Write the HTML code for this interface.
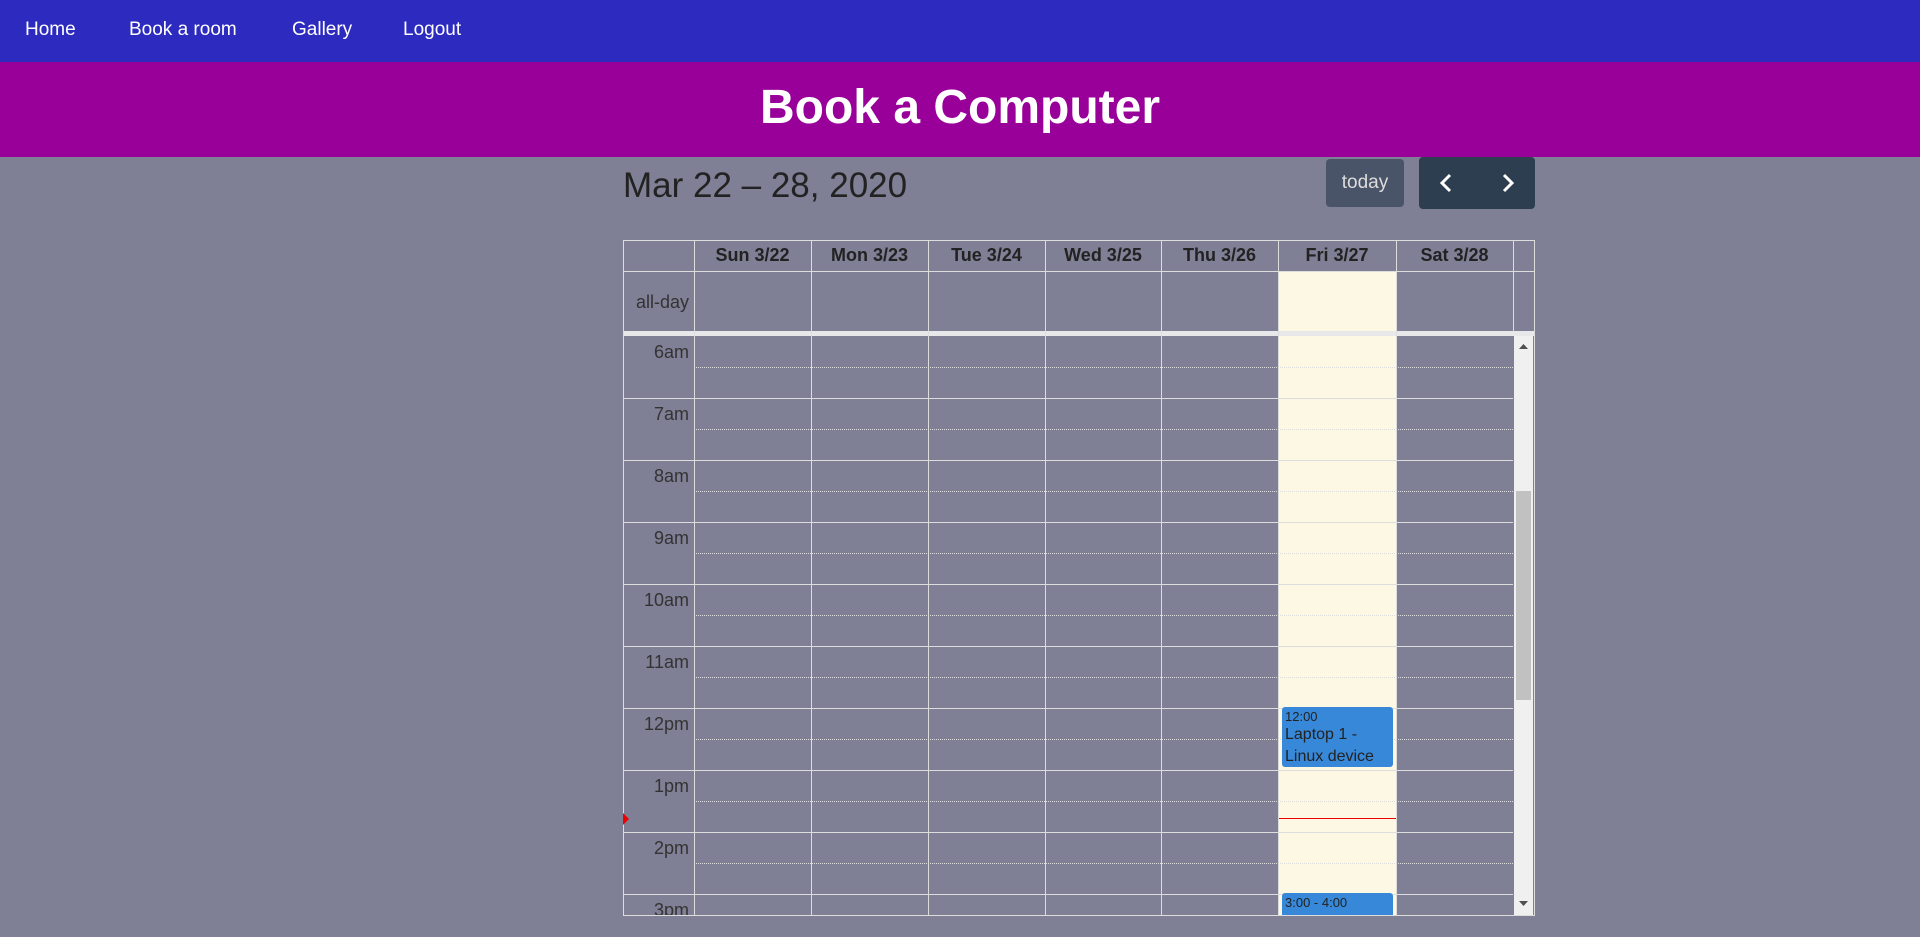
<!DOCTYPE html>
<html><head><style>
*{margin:0;padding:0;box-sizing:border-box}
body{width:1920px;height:937px;background:#7f7f95;font-family:"Liberation Sans",sans-serif;position:relative;overflow:hidden;color:#222}
.nav{position:absolute;left:0;top:0;width:1920px;height:62px;background:#2d2abf}
.nav a{position:absolute;top:19px;color:#fff;font-size:19px;text-decoration:none}
.hdr{position:absolute;left:0;top:62px;width:1920px;height:95px;background:#990099;color:#fff;font-size:48px;font-weight:bold;text-align:center;line-height:92px}
.title{position:absolute;left:623px;top:166px;font-size:35px;color:#222}
.today{position:absolute;left:1326px;top:159px;width:78px;height:48px;background:#4a5468;border-radius:4px;color:#ddd;font-size:19px;text-align:center;line-height:48px}
.grp{position:absolute;left:1419px;top:157px;width:116px;height:52px;background:#2c3e50;border-radius:4px}
.ab{position:absolute;background:#ddd}
.dl{position:absolute;height:0;border-top:1px dotted #ddd}
.cell{position:absolute}
.lbl{position:absolute;width:66px;text-align:right;font-size:18px;color:#333;white-space:nowrap}
.dh{position:absolute;top:240px;height:31px;line-height:31px;font-weight:bold;font-size:18px;text-align:center;color:#222}
.ev{position:absolute;left:1282px;width:111px;background:#3788d8;border-radius:3px;overflow:hidden;color:#222;padding:2px 3px}
</style></head><body>
<div class="nav">
<a style="left:25px">Home</a><a style="left:129px">Book a room</a><a style="left:292px">Gallery</a><a style="left:403px">Logout</a>
</div>
<div class="hdr">Book a Computer</div>
<div class="title">Mar 22 – 28, 2020</div>
<div class="today">today</div>
<div class="grp">
<svg width="116" height="52" style="position:absolute;left:0;top:0"><path d="M31 18 L23 26 L31 34" stroke="#fff" stroke-width="3" fill="none"/><path d="M85 18 L93 26 L85 34" stroke="#fff" stroke-width="3" fill="none"/></svg>
</div>
<div class="cell" style="left:1278px;top:271px;width:118px;height:61px;background:#fdf8e4"></div>
<div class="cell" style="left:1278px;top:336px;width:118px;height:579px;background:#fdf8e4"></div>
<div class="cell" style="left:1514px;top:336px;width:19px;height:579px;background:#f0f0f0"></div>
<div class="cell" style="left:1516px;top:491px;width:15px;height:209px;background:#c1c1c1"></div>
<svg style="position:absolute;left:1514px;top:340px" width="19" height="575"><path d="M5 9 L14 9 L9.5 4Z" fill="#505050"/><path d="M5 561 L14 561 L9.5 566Z" fill="#505050"/></svg>
<div class="ab" style="left:623px;top:240px;width:912px;height:1px"></div>
<div class="ab" style="left:623px;top:271px;width:912px;height:1px"></div>
<div class="ab" style="left:623px;top:331px;width:912px;height:5px;background:#e8e8ea"></div>
<div class="ab" style="left:623px;top:915px;width:912px;height:1px"></div>
<div class="ab" style="left:623px;top:240px;width:1px;height:676px"></div>
<div class="ab" style="left:1534px;top:240px;width:1px;height:676px"></div>
<div class="ab" style="left:1513px;top:240px;width:1px;height:92px"></div>
<div class="ab" style="left:694px;top:240px;width:1px;height:676px"></div>
<div class="ab" style="left:811px;top:240px;width:1px;height:676px"></div>
<div class="ab" style="left:928px;top:240px;width:1px;height:676px"></div>
<div class="ab" style="left:1045px;top:240px;width:1px;height:676px"></div>
<div class="ab" style="left:1161px;top:240px;width:1px;height:676px"></div>
<div class="ab" style="left:1278px;top:240px;width:1px;height:676px"></div>
<div class="ab" style="left:1396px;top:240px;width:1px;height:676px"></div>
<div class="dh" style="left:694px;width:117px">Sun 3/22</div>
<div class="dh" style="left:811px;width:117px">Mon 3/23</div>
<div class="dh" style="left:928px;width:117px">Tue 3/24</div>
<div class="dh" style="left:1045px;width:116px">Wed 3/25</div>
<div class="dh" style="left:1161px;width:117px">Thu 3/26</div>
<div class="dh" style="left:1278px;width:118px">Fri 3/27</div>
<div class="dh" style="left:1396px;width:117px">Sat 3/28</div>
<div class="lbl" style="left:623px;top:292px">all-day</div>
<div class="ab" style="left:623px;top:398px;width:890px;height:1px"></div>
<div class="ab" style="left:623px;top:460px;width:890px;height:1px"></div>
<div class="ab" style="left:623px;top:522px;width:890px;height:1px"></div>
<div class="ab" style="left:623px;top:584px;width:890px;height:1px"></div>
<div class="ab" style="left:623px;top:646px;width:890px;height:1px"></div>
<div class="ab" style="left:623px;top:708px;width:890px;height:1px"></div>
<div class="ab" style="left:623px;top:770px;width:890px;height:1px"></div>
<div class="ab" style="left:623px;top:832px;width:890px;height:1px"></div>
<div class="ab" style="left:623px;top:894px;width:890px;height:1px"></div>
<div class="dl" style="left:694px;top:367px;width:819px"></div>
<div class="dl" style="left:694px;top:429px;width:819px"></div>
<div class="dl" style="left:694px;top:491px;width:819px"></div>
<div class="dl" style="left:694px;top:553px;width:819px"></div>
<div class="dl" style="left:694px;top:615px;width:819px"></div>
<div class="dl" style="left:694px;top:677px;width:819px"></div>
<div class="dl" style="left:694px;top:739px;width:819px"></div>
<div class="dl" style="left:694px;top:801px;width:819px"></div>
<div class="dl" style="left:694px;top:863px;width:819px"></div>
<div class="lbl" style="left:623px;top:342px">6am</div>
<div class="lbl" style="left:623px;top:404px">7am</div>
<div class="lbl" style="left:623px;top:466px">8am</div>
<div class="lbl" style="left:623px;top:528px">9am</div>
<div class="lbl" style="left:623px;top:590px">10am</div>
<div class="lbl" style="left:623px;top:652px">11am</div>
<div class="lbl" style="left:623px;top:714px">12pm</div>
<div class="lbl" style="left:623px;top:776px">1pm</div>
<div class="lbl" style="left:623px;top:838px">2pm</div>
<div style="position:absolute;left:623px;top:896px;width:70px;height:19px;overflow:hidden"><div class="lbl" style="left:0;top:4px">3pm</div></div>
<div class="ev" style="top:707px;height:60px"><div style="font-size:13px">12:00</div><div style="font-size:16px;line-height:22px">Laptop 1 - Linux device</div></div>
<div class="ev" style="top:893px;height:22px;border-radius:3px 3px 0 0"><div style="font-size:13px">3:00 - 4:00</div></div>
<div class="cell" style="left:1279px;top:818px;width:117px;height:1px;background:#e00"></div>
<svg style="position:absolute;left:623px;top:813px" width="8" height="12"><path d="M0 0 L6 6 L0 12Z" fill="#e00"/></svg>
</body></html>
